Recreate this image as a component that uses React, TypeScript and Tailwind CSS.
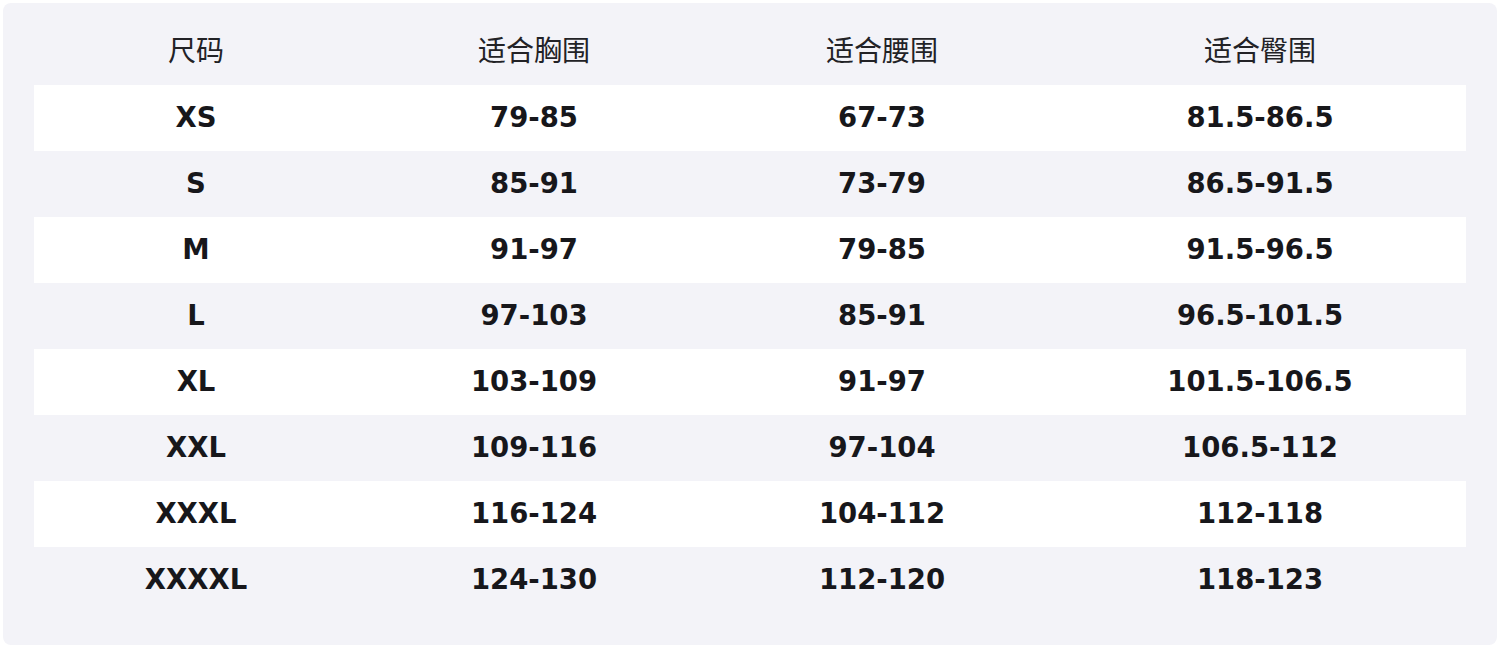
const headers = ['尺码', '适合胸围', '适合腰围', '适合臀围']

const rows: string[][] = [
  ['XS', '79-85', '67-73', '81.5-86.5'],
  ['S', '85-91', '73-79', '86.5-91.5'],
  ['M', '91-97', '79-85', '91.5-96.5'],
  ['L', '97-103', '85-91', '96.5-101.5'],
  ['XL', '103-109', '91-97', '101.5-106.5'],
  ['XXL', '109-116', '97-104', '106.5-112'],
  ['XXXL', '116-124', '104-112', '112-118'],
  ['XXXXL', '124-130', '112-120', '118-123'],
]

const cols = 'grid grid-cols-[324px_352px_344px_412px]'

export default function App() {
  return (
    <div className="h-[648px] w-[1500px] bg-white p-[3px]">
      <div className="h-full rounded-lg bg-[#f3f3f8] px-[31px] pt-[14px]">
        <div
          className={`${cols} h-[68px] items-center pb-[4px] text-[28px] text-[#222226]`}
          style={{ fontFamily: '"Noto Sans CJK SC", "Noto Sans", sans-serif' }}
        >
          {headers.map((h) => (
            <div key={h} className="text-center">
              {h}
            </div>
          ))}
        </div>
        <div style={{ fontFamily: '"DejaVu Sans", Verdana, sans-serif' }}>
          {rows.map((r, i) => (
            <div
              key={r[0]}
              className={`${cols} h-[66px] items-center text-[27.5px] font-bold text-[#17171b] ${
                i % 2 === 0 ? 'bg-white' : ''
              }`}
            >
              {r.map((c, j) => (
                <div key={j} className="text-center">
                  {c}
                </div>
              ))}
            </div>
          ))}
        </div>
      </div>
    </div>
  )
}
